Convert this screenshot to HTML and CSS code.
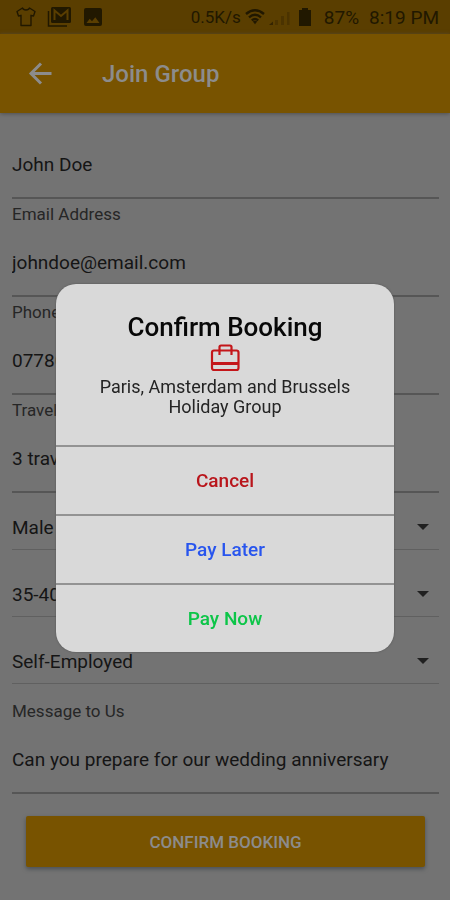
FILE: index.html
```html
<!DOCTYPE html>
<html lang="en">
<head>
<meta charset="utf-8">
<meta name="viewport" content="width=device-width, initial-scale=1">
<title>Join Group</title>
<link rel="stylesheet" href="styles.css">
</head>
<body>
<div class="status">
  <div class="status-group notices">
    <svg width="22" height="22" viewBox="0 0 22 22" fill="none" stroke="currentColor" stroke-width="1.4" stroke-linejoin="round"><path d="M7.500 2 2 5.500 3.500 10 6 9.300V19.500H16V9.300L18.500 10 20 5.500 14.500 2C13.800 4.600 8.200 4.600 7.500 2Z"/></svg>
    <svg width="26" height="22" viewBox="0 0 26 22"><path d="M1.500 5V20H20" fill="none" stroke="currentColor" stroke-width="1.500"/><rect x="4" y="1" width="20" height="16" rx="1.500" fill="currentColor"/><path d="M7.500 14V4.500L14 10 20.500 4.500V14" fill="none" stroke="#5a3e00" stroke-width="2"/></svg>
    <svg width="20" height="22" viewBox="0 0 20 22"><path fill="currentColor" fill-rule="evenodd" d="M3 2H17Q19 2 19 4V18Q19 20 17 20H3Q1 20 1 18V4Q1 2 3 2ZM3.500 17H16.500L12.300 11.200 9 15.300 6.700 12.700Z"/></svg>
  </div>
  <div class="status-group">
    <span class="speed">0.5K/s</span>
    <svg width="20" height="18" viewBox="0 0 20 18" fill="none" stroke="currentColor" stroke-width="2.400"><path d="M1 6Q10-1.500 19 6M4 9.300Q10 4.300 16 9.300M6.800 12.400Q10 9.800 13.200 12.400"/><path d="M7.800 13.500Q10 12 12.200 13.500L10 16.200Z" fill="currentColor" stroke="none"/></svg>
    <svg class="signal" width="21" height="18" viewBox="0 0 21 18"><path fill="#352400" d="M0 17 4 13.500V17Z"/><path fill="#4b3300" d="M6 12H9V17H6ZM12 8H15V17H12ZM18 4H20.500V17H18Z"/></svg>
    <svg class="battery" width="14" height="20" viewBox="0 0 14 20"><path fill="currentColor" d="M4 1H10V3H13V19H1V3H4Z"/></svg>
    <span>87%</span>
    <span class="clock">8:19 PM</span>
  </div>
</div>
<header class="bar">
  <button class="back" type="button" aria-label="Back"><svg width="24" height="24" viewBox="0 0 24 24" fill="none" stroke="currentColor" stroke-width="3"><path d="M23.500 11.500H3M13 1.500 3 11.500 13 21.500"/></svg></button>
  <h1>Join Group</h1>
</header>
<form class="form">
  <div class="field"><input type="text" aria-label="Name" value="John Doe"></div>
  <div class="field"><label for="email">Email Address</label><input id="email" type="email" value="johndoe@email.com"></div>
  <div class="field"><label for="phone">Phone</label><input id="phone" type="tel" value="07780"></div>
  <div class="field"><label for="travelers">Travelers</label><input id="travelers" type="text" value="3 travelers"></div>
  <div class="choices">
    <div class="choice"><select aria-label="Gender"><option>Male</option></select><svg width="14" height="8" viewBox="0 0 14 8"><path d="M1 1H13L7 7Z" fill="#202020"/></svg></div>
    <div class="choice"><select aria-label="Age"><option>35-40</option></select><svg width="14" height="8" viewBox="0 0 14 8"><path d="M1 1H13L7 7Z" fill="#202020"/></svg></div>
    <div class="choice"><select aria-label="Employment"><option>Self-Employed</option></select><svg width="14" height="8" viewBox="0 0 14 8"><path d="M1 1H13L7 7Z" fill="#202020"/></svg></div>
  </div>
  <div class="field"><label for="message">Message to Us</label><input id="message" type="text" value="Can you prepare for our wedding anniversary"></div>
  <button class="submit" type="button">CONFIRM BOOKING</button>
</form>
<div class="backdrop">
  <section class="dialog" role="dialog" aria-labelledby="dialog-title">
    <div class="dialog-body">
      <h2 id="dialog-title">Confirm Booking</h2>
      <svg width="30" height="30" viewBox="0 0 30 30" fill="none" stroke="#c4161a" stroke-width="2.200" stroke-linejoin="round"><rect x="2" y="7.500" width="26.500" height="19.500" rx="2"/><path d="M9.500 12V4Q9.500 2.500 11 2.500H20Q21.500 2.500 21.500 4V12"/><path d="M2 20.500H28" stroke-width="3"/></svg>
      <p>Paris, Amsterdam and Brussels Holiday Group</p>
    </div>
    <button class="cancel" type="button">Cancel</button>
    <button class="later" type="button">Pay Later</button>
    <button class="now" type="button">Pay Now</button>
  </section>
</div>
</body>
</html>
```
FILE: styles.css
```css
* { box-sizing: border-box; }
body {
  margin: 0;
  min-height: 100vh;
  background: #737373;
  color: #151515;
  font-family: Roboto, sans-serif;
}
button, input, select { font: inherit; border: 0; padding: 0; margin: 0; background: none; color: inherit; border-radius: 0; }
svg { display: block; flex: none; }

.status {
  height: 34px;
  padding: 0 11px 0 15px;
  display: flex;
  align-items: center;
  justify-content: space-between;
  background: #5a3e00;
  color: #211800;
  font-size: 19px;
}
.status-group { display: flex; align-items: center; }
.notices { gap: 10px; }
.speed { font-size: 17px; margin-right: 4px; }
.signal { margin: 0 8px 0 4px; }
.battery { margin-right: 12px; }
.clock { margin-left: 10px; }

.bar {
  height: 79px;
  padding: 0 28px;
  display: flex;
  align-items: center;
  gap: 50px;
  background: #785300;
  color: #8c8c8c;
  box-shadow: 0 1px 4px #505050;
}
.back { width: 24px; height: 24px; }
.bar h1 { margin: 0; font-size: 24px; font-weight: 500; }

.form { padding: 18px 11px 31px 12px; }
.field label {
  display: block;
  line-height: 30px;
  font-size: 17px;
  color: #262626;
}
.field input {
  display: block;
  width: 100%;
  height: 68px;
  border-bottom: 2px solid #565656;
  font-size: 19px;
}
.choices { display: grid; gap: 22px; padding: 12px 0; }
.choice {
  display: flex;
  align-items: center;
  height: 45px;
  padding-right: 9px;
  border-bottom: 1px solid #606060;
}
.choice select { flex: 1; height: 100%; appearance: none; font-size: 19px; }
.submit {
  display: block;
  width: calc(100% - 28px);
  height: 51px;
  margin: 22px 14px 0;
  background: #785300;
  color: #8c8c8c;
  border-radius: 2px;
  box-shadow: 0 2px 4px #4a4f55;
  font-size: 17px;
  font-weight: 500;
}

.backdrop {
  position: fixed;
  inset: 0;
  padding-top: 36px;
  display: flex;
  align-items: center;
  justify-content: center;
}
.dialog {
  width: 75%;
  border-radius: 20px;
  overflow: hidden;
  background: #d9d9d9;
  box-shadow: 0 0 2px #505050;
}
.dialog-body {
  display: flex;
  flex-direction: column;
  align-items: center;
  padding: 28px 40px;
  text-align: center;
}
.dialog h2 { margin: 0 0 1px; font-size: 26px; line-height: 30px; font-weight: 500; color: #080808; }
.dialog p { margin: 4px 0 0; font-size: 18px; line-height: 20px; color: #242424; }
.dialog button {
  display: block;
  width: 100%;
  height: 69px;
  border-top: 2px solid #939393;
  font-size: 19px;
  font-weight: 500;
}
.dialog .cancel { color: #b9151b; }
.dialog .later { color: #2855ee; }
.dialog .now { color: #0cc548; }
```
